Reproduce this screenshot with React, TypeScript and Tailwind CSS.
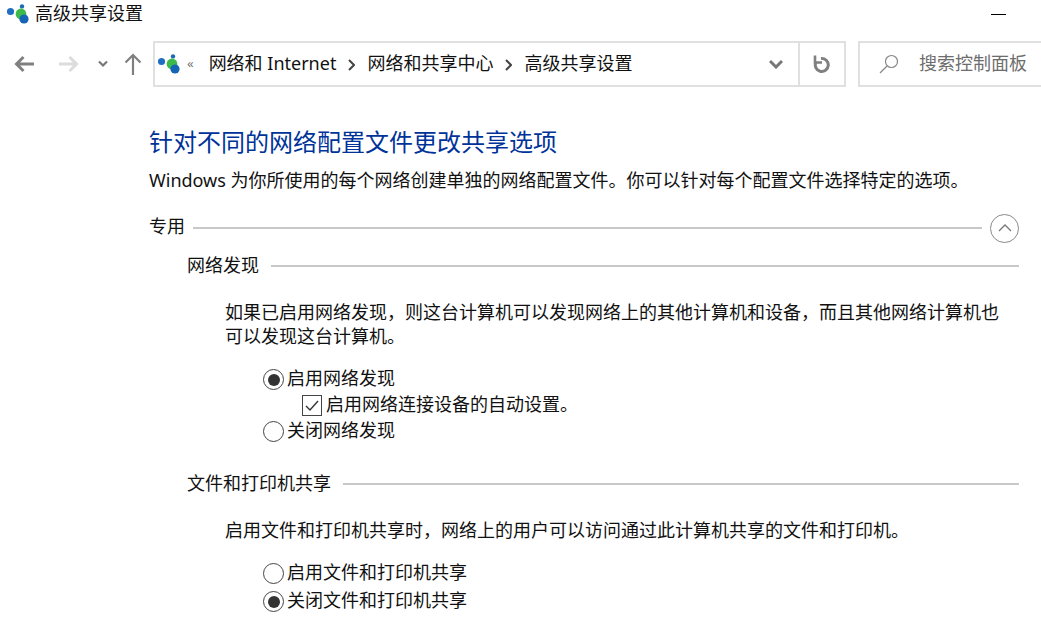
const font = { fontFamily: '"Noto Sans", "Noto Sans CJK SC", sans-serif' };

function NetIcon({ className }: { className: string }) {
  return (
    <svg viewBox="0 0 22 20" className={className}>
      <circle cx="3.5" cy="7.5" r="3.6" fill="#1f6fc0" />
      <circle cx="15" cy="2.4" r="2.2" fill="#1a6ab5" />
      <circle cx="14" cy="10" r="5.4" fill="#3dbb4a" />
      <circle cx="17" cy="15" r="4.6" fill="#1565b5" />
    </svg>
  );
}

function Radio({ on }: { on?: boolean }) {
  return (
    <span className="w-[21px] h-[21px] mt-[3px] rounded-full border border-[#444] flex items-center justify-center shrink-0 bg-white">
      {on && <span className="w-[12px] h-[12px] rounded-full bg-[#333]" />}
    </span>
  );
}

function Legend({ text, ml, mr }: { text: string; ml: string; mr: string }) {
  return (
    <div className={`flex items-center ${ml} ${mr}`}>
      <span className="leading-[24px] text-[18px] text-[#111]">{text}</span>
      <div className="h-[2px] bg-[#c8c8c8] flex-1 ml-[12px] mt-[2px]" />
    </div>
  );
}

function Option({ text, on, cls }: { text: string; on?: boolean; cls: string }) {
  return (
    <div className={`flex items-center gap-[3px] h-[26px] ${cls}`}>
      <Radio on={on} />
      <span className="text-[18px] leading-[26px] text-[#111]">{text}</span>
    </div>
  );
}

function Crumb() {
  return (
    <svg viewBox="0 0 7 12" className="w-[7px] h-[12px] mx-[12px] mt-[1px]" fill="none" stroke="#444" strokeWidth="2">
      <path d="M1 1l5 5-5 5" />
    </svg>
  );
}

export default function App() {
  return (
    <div style={font} className="w-[1041px] h-[627px] overflow-hidden bg-white relative">
      <div className="flex items-center h-[28px] pl-[7px]">
        <NetIcon className="w-[22px] h-[20px]" />
        <span className="ml-[6px] mb-[2px] text-[18px] leading-[28px] text-[#111]">高级共享设置</span>
        <div className="ml-auto mr-[35px] w-[15px] h-[1px] bg-black" />
      </div>

      <div className="flex items-center h-[46px] mt-[13px]">
        <div className="w-[153px] flex items-center shrink-0">
          <svg viewBox="0 0 22 20" className="w-[22px] h-[20px] ml-[13px]" fill="none" stroke="#808080" strokeWidth="3">
            <path d="M21 10H3M10.5 3L3.5 10l7 7" />
          </svg>
          <svg viewBox="0 0 22 20" className="w-[22px] h-[20px] ml-[23px]" fill="none" stroke="#dcdcdc" strokeWidth="3">
            <path d="M1 10h18M11.5 3l7 7-7 7" />
          </svg>
          <svg viewBox="0 0 10 8" className="w-[10px] h-[8px] ml-[18px]" fill="none" stroke="#777" strokeWidth="2.2">
            <path d="M1 1.5l4 4 4-4" />
          </svg>
          <svg viewBox="0 0 18 22" className="w-[18px] h-[22px] ml-[16px]" fill="none" stroke="#808080" strokeWidth="2.2">
            <path d="M9 22V2M1.5 9.5L9 2l7.5 7.5" />
          </svg>
        </div>

        <div className="w-[693px] h-[46px] border-2 border-[#e0e0e0] flex items-center shrink-0">
          <NetIcon className="w-[22px] h-[20px] ml-[3px]" />
          <span className="ml-[7px] text-[13px] text-[#777]">«</span>
          <span className="ml-[15px] mb-[2px] text-[18px] text-[#111]">网络和 Internet</span>
          <Crumb />
          <span className="mb-[2px] text-[18px] text-[#111]">网络和共享中心</span>
          <Crumb />
          <span className="mb-[2px] text-[18px] text-[#111]">高级共享设置</span>
          <div className="ml-auto flex items-center h-full">
            <svg viewBox="0 0 14 10" className="w-[14px] h-[10px] mr-[15px]" fill="none" stroke="#777" strokeWidth="3">
              <path d="M1 2l6 6 6-6" />
            </svg>
            <div className="w-[46px] h-full border-l-2 border-[#e0e0e0] flex items-center justify-center">
              <svg viewBox="0 0 18 18" className="w-[18px] h-[18px]" fill="none" stroke="#808080" strokeWidth="3">
                <path d="M8 3.5A6.5 6.5 0 1 1 3 7" />
                <path d="M2 0.5V7.5H9" strokeWidth="2.6" />
              </svg>
            </div>
          </div>
        </div>

        <div className="ml-[12px] w-[200px] h-[46px] border-2 border-r-0 border-[#e0e0e0] flex items-center shrink-0">
          <svg viewBox="0 0 20 20" className="w-[20px] h-[20px] ml-[19px]" fill="none" stroke="#888" strokeWidth="1.2">
            <circle cx="12.5" cy="7.5" r="6" />
            <path d="M8 12L1 19" />
          </svg>
          <span className="ml-[20px] mb-[2px] text-[18px] text-[#6d6d6d]">搜索控制面板</span>
        </div>
      </div>

      <div className="pl-[149px] mt-[38px]">
        <h1 className="text-[24px] leading-[34px] text-[#003399] font-normal">针对不同的网络配置文件更改共享选项</h1>
        <p className="text-[18px] leading-[26px] text-[#111] mt-[8px]">
          Windows 为你所使用的每个网络创建单独的网络配置文件。你可以针对每个配置文件选择特定的选项。
        </p>

        <div className="flex items-center mt-[19px] mr-[22px] h-[32px]">
          <span className="text-[18px] leading-[24px] text-[#111] mb-[4px]">专用</span>
          <div className="h-[2px] bg-[#c8c8c8] flex-1 ml-[8px] mr-[8px]" />
          <div className="w-[29px] h-[29px] rounded-full border border-[#8a8a8a] flex items-center justify-center">
            <svg viewBox="0 0 14 8" className="w-[14px] h-[8px]" fill="none" stroke="#777" strokeWidth="1.3">
              <path d="M1 7l6-6 6 6" />
            </svg>
          </div>
        </div>

        <Legend text="网络发现" ml="ml-[38px] mt-[9px]" mr="mr-[22px]" />

        <p className="ml-[76px] mr-[40px] mt-[23px] text-[18px] leading-[24px] text-[#111]">
          如果已启用网络发现，则这台计算机可以发现网络上的其他计算机和设备，而且其他网络计算机也可以发现这台计算机。
        </p>

        <Option text="启用网络发现" on cls="ml-[114px] mt-[17px]" />
        <div className="flex items-center gap-[4px] h-[26px] ml-[153px]">
          <span className="w-[20px] h-[21px] mt-[3px] border border-[#444] flex items-center justify-center shrink-0">
            <svg viewBox="0 0 14 12" className="w-[14px] h-[12px]" fill="none" stroke="#333" strokeWidth="1.4">
              <path d="M1 6l4 4 8-9" />
            </svg>
          </span>
          <span className="text-[18px] leading-[26px] text-[#111]">启用网络连接设备的自动设置。</span>
        </div>
        <Option text="关闭网络发现" cls="ml-[114px]" />

        <div className="mt-[28px]">
          <Legend text="文件和打印机共享" ml="ml-[38px]" mr="mr-[22px]" />
        </div>

        <p className="ml-[76px] mt-[22px] text-[18px] leading-[26px] text-[#111]">
          启用文件和打印机共享时，网络上的用户可以访问通过此计算机共享的文件和打印机。
        </p>

        <Option text="启用文件和打印机共享" cls="ml-[114px] mt-[16px]" />
        <Option text="关闭文件和打印机共享" on cls="ml-[114px] mt-[2px]" />
      </div>
    </div>
  );
}
